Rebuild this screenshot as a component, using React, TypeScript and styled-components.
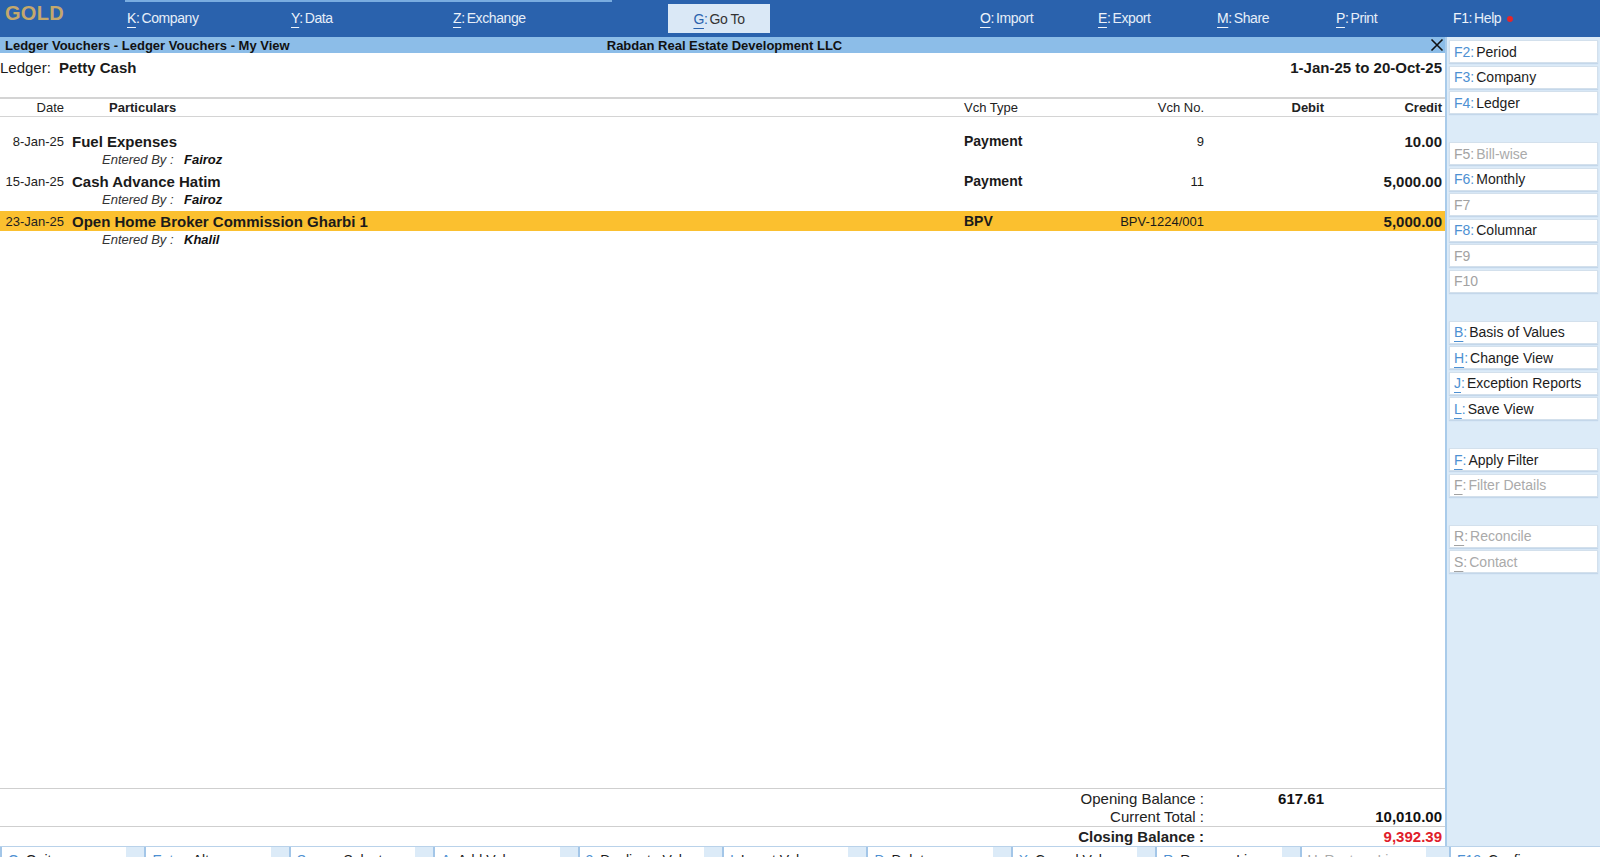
import styled, { createGlobalStyle } from "styled-components";

const GlobalStyle = createGlobalStyle`
	html, body {
		margin: 0;
		padding: 0;
		overflow: hidden;
		background: #fff;
	}
	body {
		font-family: "Liberation Sans", Arial, sans-serif;
		color: #1a1a1a;
	}
	* {
		box-sizing: border-box;
	}
`;

const COLS = "72px 1fr 130px 110px 120px 118px";

const Screen = styled.div`
	width: 1600px;
	height: 872px;
	display: flex;
	flex-direction: column;
`;

// Top menu bar
const TopBar = styled.div`
	height: 37px;
	flex: none;
	background: #2a62ad;
	display: flex;
	align-items: stretch;
	position: relative;

	&::before {
		content: "";
		position: absolute;
		left: 125px;
		top: 0;
		width: 487px;
		height: 2px;
		background: #79ace0;
	}
`;

const Logo = styled.div`
	width: 127px;
	padding-left: 5px;
	padding-top: 2px;
	font-size: 20px;
	font-weight: 700;
	color: #c4a86c;
	letter-spacing: 0.3px;
`;

const MenuItem = styled.div<{ $w?: number; $boxed?: boolean }>`
	width: ${(p) => (p.$w ? `${p.$w}px` : "auto")};
	flex: ${(p) => (p.$w ? "none" : "1")};
	display: flex;
	align-items: center;
	justify-content: ${(p) => (p.$boxed ? "center" : "flex-start")};
	margin: ${(p) => (p.$boxed ? "4px 0" : "0")};
	padding-bottom: ${(p) => (p.$boxed ? "0" : "2px")};
	background: ${(p) => (p.$boxed ? "#dae8f6" : "transparent")};
	color: ${(p) => (p.$boxed ? "#333" : "#e6eef8")};
	font-size: 14px;
	letter-spacing: -0.4px;
	white-space: nowrap;
`;

const MenuKey = styled.span<{ $boxed?: boolean }>`
	color: ${(p) => (p.$boxed ? "#2a62ad" : "#eef4fb")};
	margin-right: 2px;

	& u {
		text-underline-offset: 4px;
	}
`;

const Dot = styled.span`
	display: inline-block;
	width: 6px;
	height: 6px;
	border-radius: 50%;
	background: #e3262b;
	margin-left: 6px;
	margin-top: 2px;
`;

const Body = styled.div`
	height: 809px;
	flex: none;
	display: flex;
`;

const Main = styled.div`
	width: 1445px;
	flex: none;
	display: flex;
	flex-direction: column;
	background: #fff;
`;

const TitleBar = styled.div`
	height: 16px;
	flex: none;
	background: #8cbde8;
	display: grid;
	grid-template-columns: 1fr auto 1fr;
	align-items: center;
	padding: 0 1px 0 5px;
	font-size: 13px;
	font-weight: 700;
	color: #111;
`;

const CloseBtn = styled.div`
	justify-self: end;
	display: flex;
	align-items: center;
`;

const LedgerRow = styled.div`
	height: 44px;
	flex: none;
	display: flex;
	justify-content: space-between;
	padding: 6px 3px 0 0;
	font-size: 15px;
	line-height: 18px;
`;

const LedgerName = styled.b`
	margin-left: 8px;
`;

const Period = styled.div`
	font-weight: 700;
`;

const Grid = styled.div<{ $hl?: boolean; $h?: number }>`
	display: grid;
	grid-template-columns: ${COLS};
	align-items: center;
	height: ${(p) => p.$h ?? 20}px;
	padding-right: 3px;
	background: ${(p) => (p.$hl ? "#fbc02f" : "transparent")};
`;

const HeaderGrid = styled(Grid)`
	border-top: 2px solid #d4d4d4;
	border-bottom: 1px solid #d4d4d4;
	font-size: 13px;
	color: #222;
	flex: none;
`;

const Cell = styled.div<{ $right?: boolean; $bold?: boolean; $size?: number; $pl?: number }>`
	text-align: ${(p) => (p.$right ? "right" : "left")};
	font-weight: ${(p) => (p.$bold ? 700 : 400)};
	font-size: ${(p) => p.$size ?? 13}px;
	padding-left: ${(p) => p.$pl ?? 0}px;
	white-space: nowrap;
`;

const DateCell = styled(Cell)`
	text-align: right;
	padding-right: 8px;
	color: #222;
`;

const List = styled.div`
	flex: 1;
	padding-top: 14px;
`;

const EnteredLine = styled.div`
	height: 20px;
	padding-left: 102px;
	font-size: 13px;
	font-style: italic;
	line-height: 17px;
	color: #333;
	display: flex;
`;

const EnteredLabel = styled.span`
	width: 82px;
`;

const EnteredName = styled.b`
	color: #111;
`;

const Footer = styled.div`
	flex: none;
	border-top: 1px solid #cfcfcf;
`;

const FooterGrid = styled(Grid)`
	font-size: 15px;
`;

const FooterLabel = styled.div<{ $bold?: boolean }>`
	grid-column: 1 / 5;
	text-align: right;
	font-weight: ${(p) => (p.$bold ? 700 : 400)};
	color: #222;
`;

const FooterValue = styled.div<{ $col: number; $red?: boolean }>`
	grid-column: ${(p) => p.$col};
	text-align: right;
	font-weight: 700;
	color: ${(p) => (p.$red ? "#e0202a" : "#111")};
`;

const ClosingRow = styled(FooterGrid)`
	border-top: 1px solid #cfcfcf;
`;

// Right side button panel
const SidePanel = styled.div`
	flex: 1;
	background: #dcebf8;
	border-left: 2px solid #a9cbea;
	padding: 3px 2px 0 2px;
	display: flex;
	flex-direction: column;
	gap: 2.5px;
`;

const SideBtn = styled.div<{ $off?: boolean }>`
	height: 23px;
	flex: none;
	background: #fff;
	border: 1px solid #d3e0ec;
	box-shadow: 0 1px 1px rgba(90, 130, 170, 0.18);
	display: flex;
	align-items: center;
	padding-left: 4px;
	font-size: 14px;
	color: ${(p) => (p.$off ? "#aaa" : "#1c1c1c")};
	white-space: nowrap;
`;

const SideKey = styled.span<{ $off?: boolean }>`
	color: ${(p) => (p.$off ? "#a2a2a2" : "#4d90d2")};
	margin-right: 2px;

	& u {
		text-underline-offset: 4px;
	}
`;

const SideGap = styled.div`
	height: 23px;
	flex: none;
`;

// Bottom button bar
const BottomBar = styled.div`
	height: 26px;
	flex: none;
	background: #dcebf8;
	border-top: 1px solid #b9d2ea;
	display: flex;
`;

const BottomLeft = styled.div`
	width: 1445px;
	display: grid;
	grid-template-columns: repeat(10, 1fr);
	column-gap: 18px;
	padding-right: 19px;
`;

const BottomRight = styled.div`
	flex: 1;
	padding-left: 4px;
	display: flex;
`;

const BottomBtn = styled.div<{ $off?: boolean }>`
	background: #fff;
	border-left: 2px solid #a3c6e8;
	padding: 4px 0 0 6px;
	font-size: 14px;
	line-height: 18px;
	color: ${(p) => (p.$off ? "#aaa" : "#1c1c1c")};
	white-space: nowrap;
	overflow: hidden;
	flex: 1;
`;

const BottomKey = styled.span<{ $off?: boolean }>`
	color: ${(p) => (p.$off ? "#a2a2a2" : "#4d90d2")};
	margin-right: 3px;
`;

const topMenu = [
	{ k: "K", label: "Company", w: 164 },
	{ k: "Y", label: "Data", w: 162 },
	{ k: "Z", label: "Exchange", w: 215 },
	{ k: "G", label: "Go To", w: 102, boxed: true },
	{ k: "", label: "", w: 210 },
	{ k: "O", label: "Import", w: 118 },
	{ k: "E", label: "Export", w: 119 },
	{ k: "M", label: "Share", w: 119 },
	{ k: "P", label: "Print", w: 117 },
];

type Side = { k: string; label?: string; off?: boolean; u?: boolean } | null;

const sideButtons: Side[] = [
	{ k: "F2", label: "Period" },
	{ k: "F3", label: "Company" },
	{ k: "F4", label: "Ledger" },
	null,
	{ k: "F5", label: "Bill-wise", off: true },
	{ k: "F6", label: "Monthly" },
	{ k: "F7", off: true },
	{ k: "F8", label: "Columnar" },
	{ k: "F9", off: true },
	{ k: "F10", off: true },
	null,
	{ k: "B", label: "Basis of Values", u: true },
	{ k: "H", label: "Change View", u: true },
	{ k: "J", label: "Exception Reports", u: true },
	{ k: "L", label: "Save View", u: true },
	null,
	{ k: "F", label: "Apply Filter", u: true },
	{ k: "F", label: "Filter Details", u: true, off: true },
	null,
	{ k: "R", label: "Reconcile", u: true, off: true },
	{ k: "S", label: "Contact", u: true, off: true },
];

const vouchers = [
	{ date: "8-Jan-25", part: "Fuel Expenses", type: "Payment", no: "9", credit: "10.00", by: "Fairoz" },
	{ date: "15-Jan-25", part: "Cash Advance Hatim", type: "Payment", no: "11", credit: "5,000.00", by: "Fairoz" },
	{
		date: "23-Jan-25",
		part: "Open Home Broker Commission Gharbi 1",
		type: "BPV",
		no: "BPV-1224/001",
		credit: "5,000.00",
		by: "Khalil",
		active: true,
	},
];

const bottomButtons = [
	{ k: "Q", label: "Quit" },
	{ k: "Enter", label: "Alter" },
	{ k: "Space", label: "Select" },
	{ k: "A", label: "Add Vch" },
	{ k: "2", label: "Duplicate Vch" },
	{ k: "I", label: "Insert Vch" },
	{ k: "D", label: "Delete" },
	{ k: "X", label: "Cancel Vch" },
	{ k: "R", label: "Remove Line" },
	{ k: "U", label: "Restore Line", off: true },
];

export default function App() {
	return (
		<>
			<GlobalStyle />
			<Screen>
				<TopBar>
					<Logo>GOLD</Logo>
					{topMenu.map((m, i) => (
						<MenuItem key={i} $w={m.w} $boxed={m.boxed}>
							{m.k && (
								<MenuKey $boxed={m.boxed}>
									<u>{m.k}</u>:
								</MenuKey>
							)}
							{m.label}
						</MenuItem>
					))}
					<MenuItem>
						<MenuKey>F1:</MenuKey>
						Help
						<Dot />
					</MenuItem>
				</TopBar>

				<Body>
					<Main>
						<TitleBar>
							<span>Ledger Vouchers - Ledger Vouchers - My View</span>
							<span>Rabdan Real Estate Development LLC</span>
							<CloseBtn>
								<svg width="14" height="14" viewBox="0 0 14 14">
									<path d="M1.5 1.5 L12.5 12.5 M12.5 1.5 L1.5 12.5" stroke="#111" strokeWidth="1.6" />
								</svg>
							</CloseBtn>
						</TitleBar>

						<LedgerRow>
							<div>
								Ledger:<LedgerName>Petty Cash</LedgerName>
							</div>
							<Period>1-Jan-25 to 20-Oct-25</Period>
						</LedgerRow>

						<HeaderGrid $h={20}>
							<DateCell>Date</DateCell>
							<Cell $bold $pl={37}>
								Particulars
							</Cell>
							<Cell>Vch Type</Cell>
							<Cell $right>Vch No.</Cell>
							<Cell $right $bold>
								Debit
							</Cell>
							<Cell $right $bold>
								Credit
							</Cell>
						</HeaderGrid>

						<List>
							{vouchers.map((v) => (
								<div key={v.date}>
									<Grid $hl={v.active}>
										<DateCell>{v.date}</DateCell>
										<Cell $bold $size={15}>
											{v.part}
										</Cell>
										<Cell $bold $size={14}>
											{v.type}
										</Cell>
										<Cell $right>{v.no}</Cell>
										<Cell />
										<Cell $right $bold $size={15}>
											{v.credit}
										</Cell>
									</Grid>
									<EnteredLine>
										<EnteredLabel>Entered By :</EnteredLabel>
										<EnteredName>{v.by}</EnteredName>
									</EnteredLine>
								</div>
							))}
						</List>

						<Footer>
							<FooterGrid $h={18}>
								<FooterLabel>Opening Balance :</FooterLabel>
								<FooterValue $col={5}>617.61</FooterValue>
							</FooterGrid>
							<FooterGrid $h={19}>
								<FooterLabel>Current Total :</FooterLabel>
								<FooterValue $col={6}>10,010.00</FooterValue>
							</FooterGrid>
							<ClosingRow $h={20}>
								<FooterLabel $bold>Closing Balance :</FooterLabel>
								<FooterValue $col={6} $red>
									9,392.39
								</FooterValue>
							</ClosingRow>
						</Footer>
					</Main>

					<SidePanel>
						{sideButtons.map((b, i) =>
							b ? (
								<SideBtn key={i} $off={b.off}>
									<SideKey $off={b.off}>
										{b.u ? <u>{b.k}</u> : b.k}
										{b.label ? ":" : ""}
									</SideKey>
									{b.label}
								</SideBtn>
							) : (
								<SideGap key={i} />
							)
						)}
					</SidePanel>
				</Body>

				<BottomBar>
					<BottomLeft>
						{bottomButtons.map((b) => (
							<BottomBtn key={b.k} $off={b.off}>
								<BottomKey $off={b.off}>{b.k}:</BottomKey>
								{b.label}
							</BottomBtn>
						))}
					</BottomLeft>
					<BottomRight>
						<BottomBtn>
							<BottomKey>F12:</BottomKey>
							Configure
						</BottomBtn>
					</BottomRight>
				</BottomBar>
			</Screen>
		</>
	);
}
